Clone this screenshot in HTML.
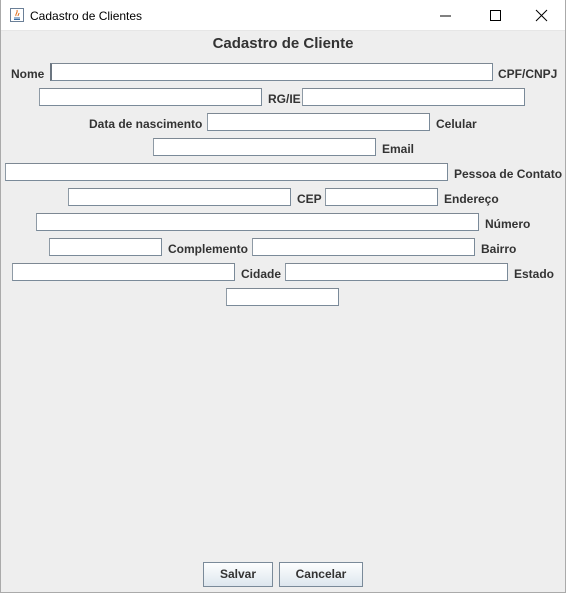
<!DOCTYPE html>
<html><head><meta charset="utf-8"><style>
*{margin:0;padding:0;box-sizing:border-box}
body{width:566px;height:593px;background:#eeeeee;font-family:"Liberation Sans",sans-serif;position:relative;overflow:hidden}
.tb{position:absolute;left:0;top:0;width:566px;height:31px;background:#fff;border-bottom:1px solid #e6e6e6}
.tb .t{position:absolute;left:30px;top:9px;font-size:12px;color:#000}
.f{position:absolute;height:18px;background:#fff;border:1px solid #7a8a99;border-left-color:#8e9aa5;border-top-color:#7d8893}
.l{position:absolute;font-size:12px;font-weight:bold;color:#333;line-height:18px;white-space:nowrap;margin-top:1px}
.b{position:absolute;top:562px;height:25px;border:1px solid #7a8a99;background:linear-gradient(#fdfefe,#dde6ee);font-size:12px;font-weight:bold;color:#333;text-align:center;line-height:23px}
.frame{position:absolute;left:0;top:0;width:566px;height:593px;border:1px solid #aaaaaa;border-top:none;pointer-events:none}
</style></head><body>
<div class="tb">
<svg style="position:absolute;left:9px;top:7px" width="16" height="16" viewBox="0 0 16 16"><rect x="1.5" y="1.5" width="13" height="13" fill="#fff" stroke="#6a7f97"/><path d="M5 11h6M5 12.5h6" stroke="#3b6ea5"/><path d="M7 9c-1-2 2-3 1-6M9 9c0-1 1-2 1-3" stroke="#e07020" fill="none"/></svg>
<div class="t">Cadastro de Clientes</div>
<svg style="position:absolute;left:440px;top:9px" width="110" height="14" viewBox="0 0 110 14"><path d="M0 7h11" stroke="#000"/><rect x="50.5" y="1.5" width="10" height="10" fill="none" stroke="#000"/><path d="M96 1l11 11M107 1l-11 11" stroke="#000"/></svg>
</div>
<div style="position:absolute;left:0;width:566px;top:35px;text-align:center;font-size:15px;font-weight:bold;color:#333">Cadastro de Cliente</div>

<div class="l" style="left:11px;top:64px">Nome</div>
<div class="f" style="left:50px;top:63px;width:443px;border-left:2px solid #6b7580"></div>
<div class="l" style="left:498px;top:64px">CPF/CNPJ</div>

<div class="f" style="left:39px;top:88px;width:223px"></div>
<div class="l" style="left:268px;top:89px">RG/IE</div>
<div class="f" style="left:302px;top:88px;width:223px"></div>

<div class="l" style="left:89px;top:114px">Data de nascimento</div>
<div class="f" style="left:207px;top:113px;width:223px"></div>
<div class="l" style="left:436px;top:114px">Celular</div>

<div class="f" style="left:153px;top:138px;width:223px"></div>
<div class="l" style="left:382px;top:139px">Email</div>

<div class="f" style="left:5px;top:163px;width:443px"></div>
<div class="l" style="left:454px;top:164px">Pessoa de Contato</div>

<div class="f" style="left:68px;top:188px;width:223px"></div>
<div class="l" style="left:297px;top:189px">CEP</div>
<div class="f" style="left:325px;top:188px;width:113px"></div>
<div class="l" style="left:444px;top:189px">Endereço</div>

<div class="f" style="left:36px;top:213px;width:443px"></div>
<div class="l" style="left:485px;top:214px">Número</div>

<div class="f" style="left:49px;top:238px;width:113px"></div>
<div class="l" style="left:168px;top:239px">Complemento</div>
<div class="f" style="left:252px;top:238px;width:223px"></div>
<div class="l" style="left:481px;top:239px">Bairro</div>

<div class="f" style="left:12px;top:263px;width:223px"></div>
<div class="l" style="left:241px;top:264px">Cidade</div>
<div class="f" style="left:285px;top:263px;width:223px"></div>
<div class="l" style="left:514px;top:264px">Estado</div>

<div class="f" style="left:226px;top:288px;width:113px"></div>

<div class="b" style="left:203px;width:70px">Salvar</div>
<div class="b" style="left:279px;width:84px">Cancelar</div>
<div class="frame"></div>
</body></html>
